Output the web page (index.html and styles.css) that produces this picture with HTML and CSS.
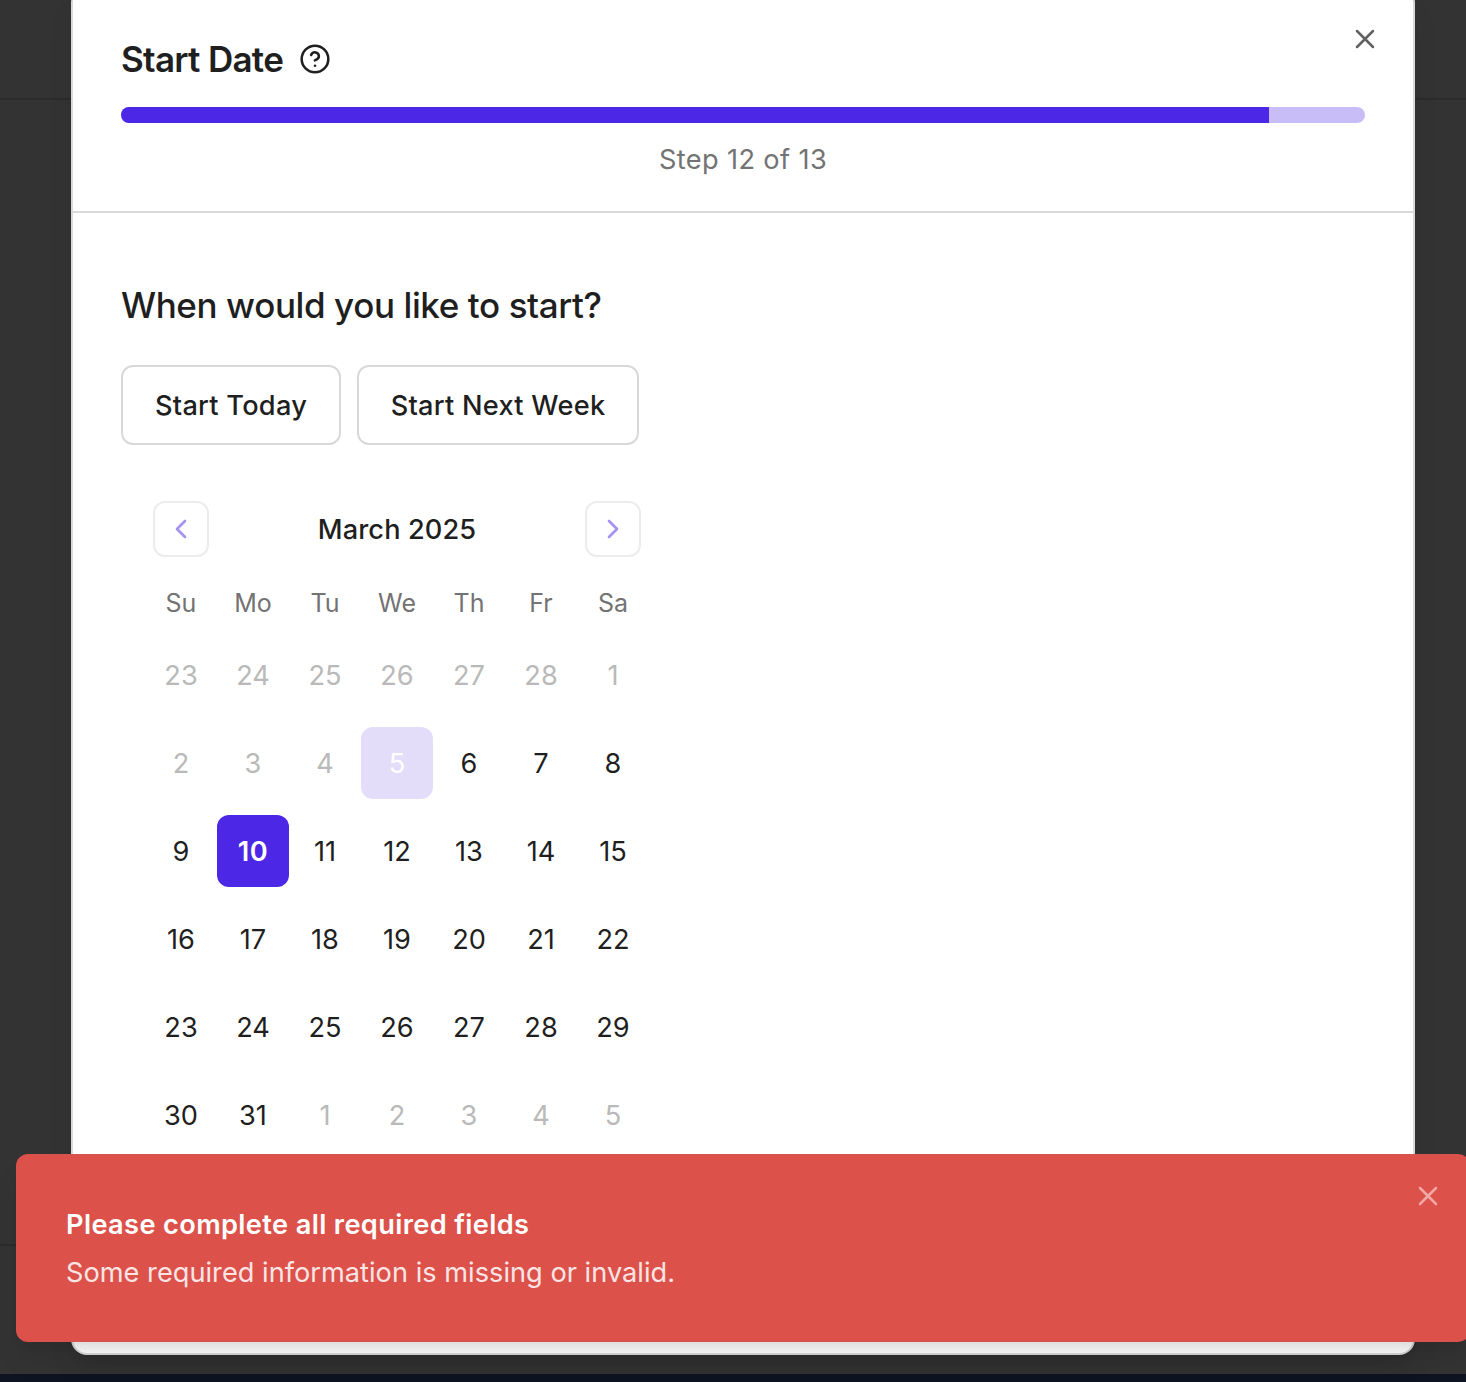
FILE: index.html
```
<!DOCTYPE html>
<html lang="en">
<head>
<meta charset="utf-8">
<title>Start Date</title>
<link rel="stylesheet" href="styles.css">
</head>
<body>
<div class="page">
  <div class="page-top"></div>
  <div class="page-middle"></div>
  <div class="page-bottom"></div>
  <div class="page-footer"></div>
</div>

<div class="modal" role="dialog">
  <header class="modal-header">
    <div class="title-row">
      <h1 class="title">Start Date</h1>
      <svg class="help" viewBox="0 0 24 24"><circle cx="12" cy="12" r="10"/><path d="M9.09 9a3 3 0 0 1 5.83 1c0 2-3 3-3 3"/><path d="M12 17h.01"/></svg>
    </div>
    <div class="progress"><div class="progress-fill"></div></div>
    <p class="step">Step 12 of 13</p>
    <button class="close modal-close" aria-label="Close"><svg viewBox="0 0 24 24"><path d="M18 6 6 18M6 6l12 12"/></svg></button>
  </header>
  <main class="modal-body">
    <h2 class="question">When would you like to start?</h2>
    <div class="quick">
      <button class="quick-btn today">Start Today</button>
      <button class="quick-btn next-week">Start Next Week</button>
    </div>
    <section class="calendar">
      <div class="calendar-head">
        <button class="nav" aria-label="Previous month"><svg viewBox="0 0 24 24"><path d="m15 18-6-6 6-6"/></svg></button>
        <span class="month">March 2025</span>
        <button class="nav" aria-label="Next month"><svg viewBox="0 0 24 24"><path d="m9 18 6-6-6-6"/></svg></button>
      </div>
      <div class="week weekdays"><span>Su</span><span>Mo</span><span>Tu</span><span>We</span><span>Th</span><span>Fr</span><span>Sa</span></div>
      <div class="week muted"><span>23</span><span>24</span><span>25</span><span>26</span><span>27</span><span>28</span><span>1</span></div>
      <div class="week"><span class="muted">2</span><span class="muted">3</span><span class="muted">4</span><span class="today-cell">5</span><span>6</span><span>7</span><span>8</span></div>
      <div class="week"><span>9</span><span class="selected">10</span><span>11</span><span>12</span><span>13</span><span>14</span><span>15</span></div>
      <div class="week"><span>16</span><span>17</span><span>18</span><span>19</span><span>20</span><span>21</span><span>22</span></div>
      <div class="week"><span>23</span><span>24</span><span>25</span><span>26</span><span>27</span><span>28</span><span>29</span></div>
      <div class="week"><span>30</span><span>31</span><span class="muted">1</span><span class="muted">2</span><span class="muted">3</span><span class="muted">4</span><span class="muted">5</span></div>
    </section>
  </main>
</div>

<div class="toast" role="alert">
  <p class="toast-title">Please complete all required fields</p>
  <p class="toast-text">Some required information is missing or invalid.</p>
  <button class="close toast-close" aria-label="Dismiss"><svg viewBox="0 0 24 24"><path d="M18 6 6 18M6 6l12 12"/></svg></button>
</div>
</body>
</html>
```
FILE: styles.css
```
* { box-sizing: border-box; margin: 0; padding: 0; }
html, body { width: 100%; height: 1382px; overflow: hidden; }
body {
  position: relative;
  font-family: Inter, "Liberation Sans", sans-serif;
  font-size: 27.2px;
  line-height: 40px;
  color: #1f1f1f;
  background: #333;
}
button { font: inherit; color: inherit; background: none; border: 0; }
svg { display: block; fill: none; stroke: currentColor; stroke-width: 2; stroke-linecap: round; stroke-linejoin: round; }

.page { display: flex; flex-direction: column; height: 1382px; }
.page-top { height: 100px; border-bottom: 2px solid #2b2b2b; }
.page-middle { height: 1146px; border-bottom: 2px solid #2b2b2b; }
.page-bottom { flex: 1; }
.page-footer { height: 8px; background: #0e1421; }

.modal {
  position: absolute;
  left: 71px;
  top: -13px;
  width: 1344px;
  height: 1368px;
  background: #fff;
  border: 2px solid #d9d9d9;
  border-radius: 16px;
  box-shadow: 0 20px 30px -6px rgba(0, 0, 0, .1), 0 8px 12px -8px rgba(0, 0, 0, .1);
}
.modal-header { position: relative; height: 224px; padding: 48px; border-bottom: 2px solid #d9d9d9; }
.title-row { display: flex; align-items: center; gap: 16px; height: 44px; }
.title { font-size: 35px; font-weight: 600; line-height: 46px; letter-spacing: -0.7px; }
.help { width: 32px; height: 32px; stroke-width: 1.9; }
.progress { height: 16px; margin-top: 26px; border-radius: 8px; background: #c8bdf7; overflow: hidden; }
.progress-fill { width: 92.3%; height: 100%; background: #4c27e5; }
.step { margin-top: 17px; text-align: center; letter-spacing: 0.37px; color: #737373; }
.close svg { width: 32px; height: 32px; stroke-width: 1.9; }
.modal-close { position: absolute; right: 32px; top: 34px; color: #616161; }

.modal-body { padding: 64px 48px 0; }
.question { font-size: 35px; font-weight: 500; line-height: 56px; letter-spacing: -0.4px; }
.quick { display: flex; gap: 16px; margin-top: 32px; }
.quick-btn { height: 80px; padding-top: 2px; border: 2px solid #d9d9d9; border-radius: 12px; font-weight: 500; letter-spacing: 0.25px; white-space: nowrap; }
.today { width: 220px; }
.next-week { width: 282px; }

.calendar { width: 504px; margin: 56px 0 0 24px; }
.calendar-head { display: flex; justify-content: space-between; align-items: center; height: 56px; padding: 0 8px; font-weight: 500; letter-spacing: 0.1px; }
.month { padding-top: 2px; }
.nav { display: grid; place-items: center; width: 56px; height: 56px; border: 2px solid #ececec; border-radius: 12px; color: #a593f2; }
.nav svg { width: 32px; height: 32px; }
.week { display: grid; grid-template-columns: repeat(7, 72px); grid-auto-rows: 72px; margin-top: 16px; line-height: 74px; text-align: center; }
.weekdays { grid-auto-rows: 36px; margin-top: 28px; font-size: 25px; line-height: 36px; color: #737373; }
.muted { color: #b9b9b9; }
.weekdays + .week { margin-top: 18px; }
.today-cell, .selected { border-radius: 12px; }
.today-cell { color: #fff; background: #e4ddfa; }
.selected { color: #fff; background: #4c27e5; font-weight: 600; letter-spacing: 0.5px; }

.toast {
  position: absolute;
  left: 16px;
  top: 1154px;
  width: 1454px;
  height: 188px;
  padding: 51px 50px;
  border-radius: 12px;
  color: #fff;
  background: #dc514a;
  box-shadow: 0 20px 30px -6px rgba(0, 0, 0, .1), 0 8px 12px -8px rgba(0, 0, 0, .1);
}
.toast-title { font-weight: 600; letter-spacing: 0.37px; }
.toast-text { margin-top: 8px; letter-spacing: 0.01px; color: #fbe5e4; }
.toast-close { position: absolute; right: 26px; top: 26px; color: #f1a9a5; }
```
